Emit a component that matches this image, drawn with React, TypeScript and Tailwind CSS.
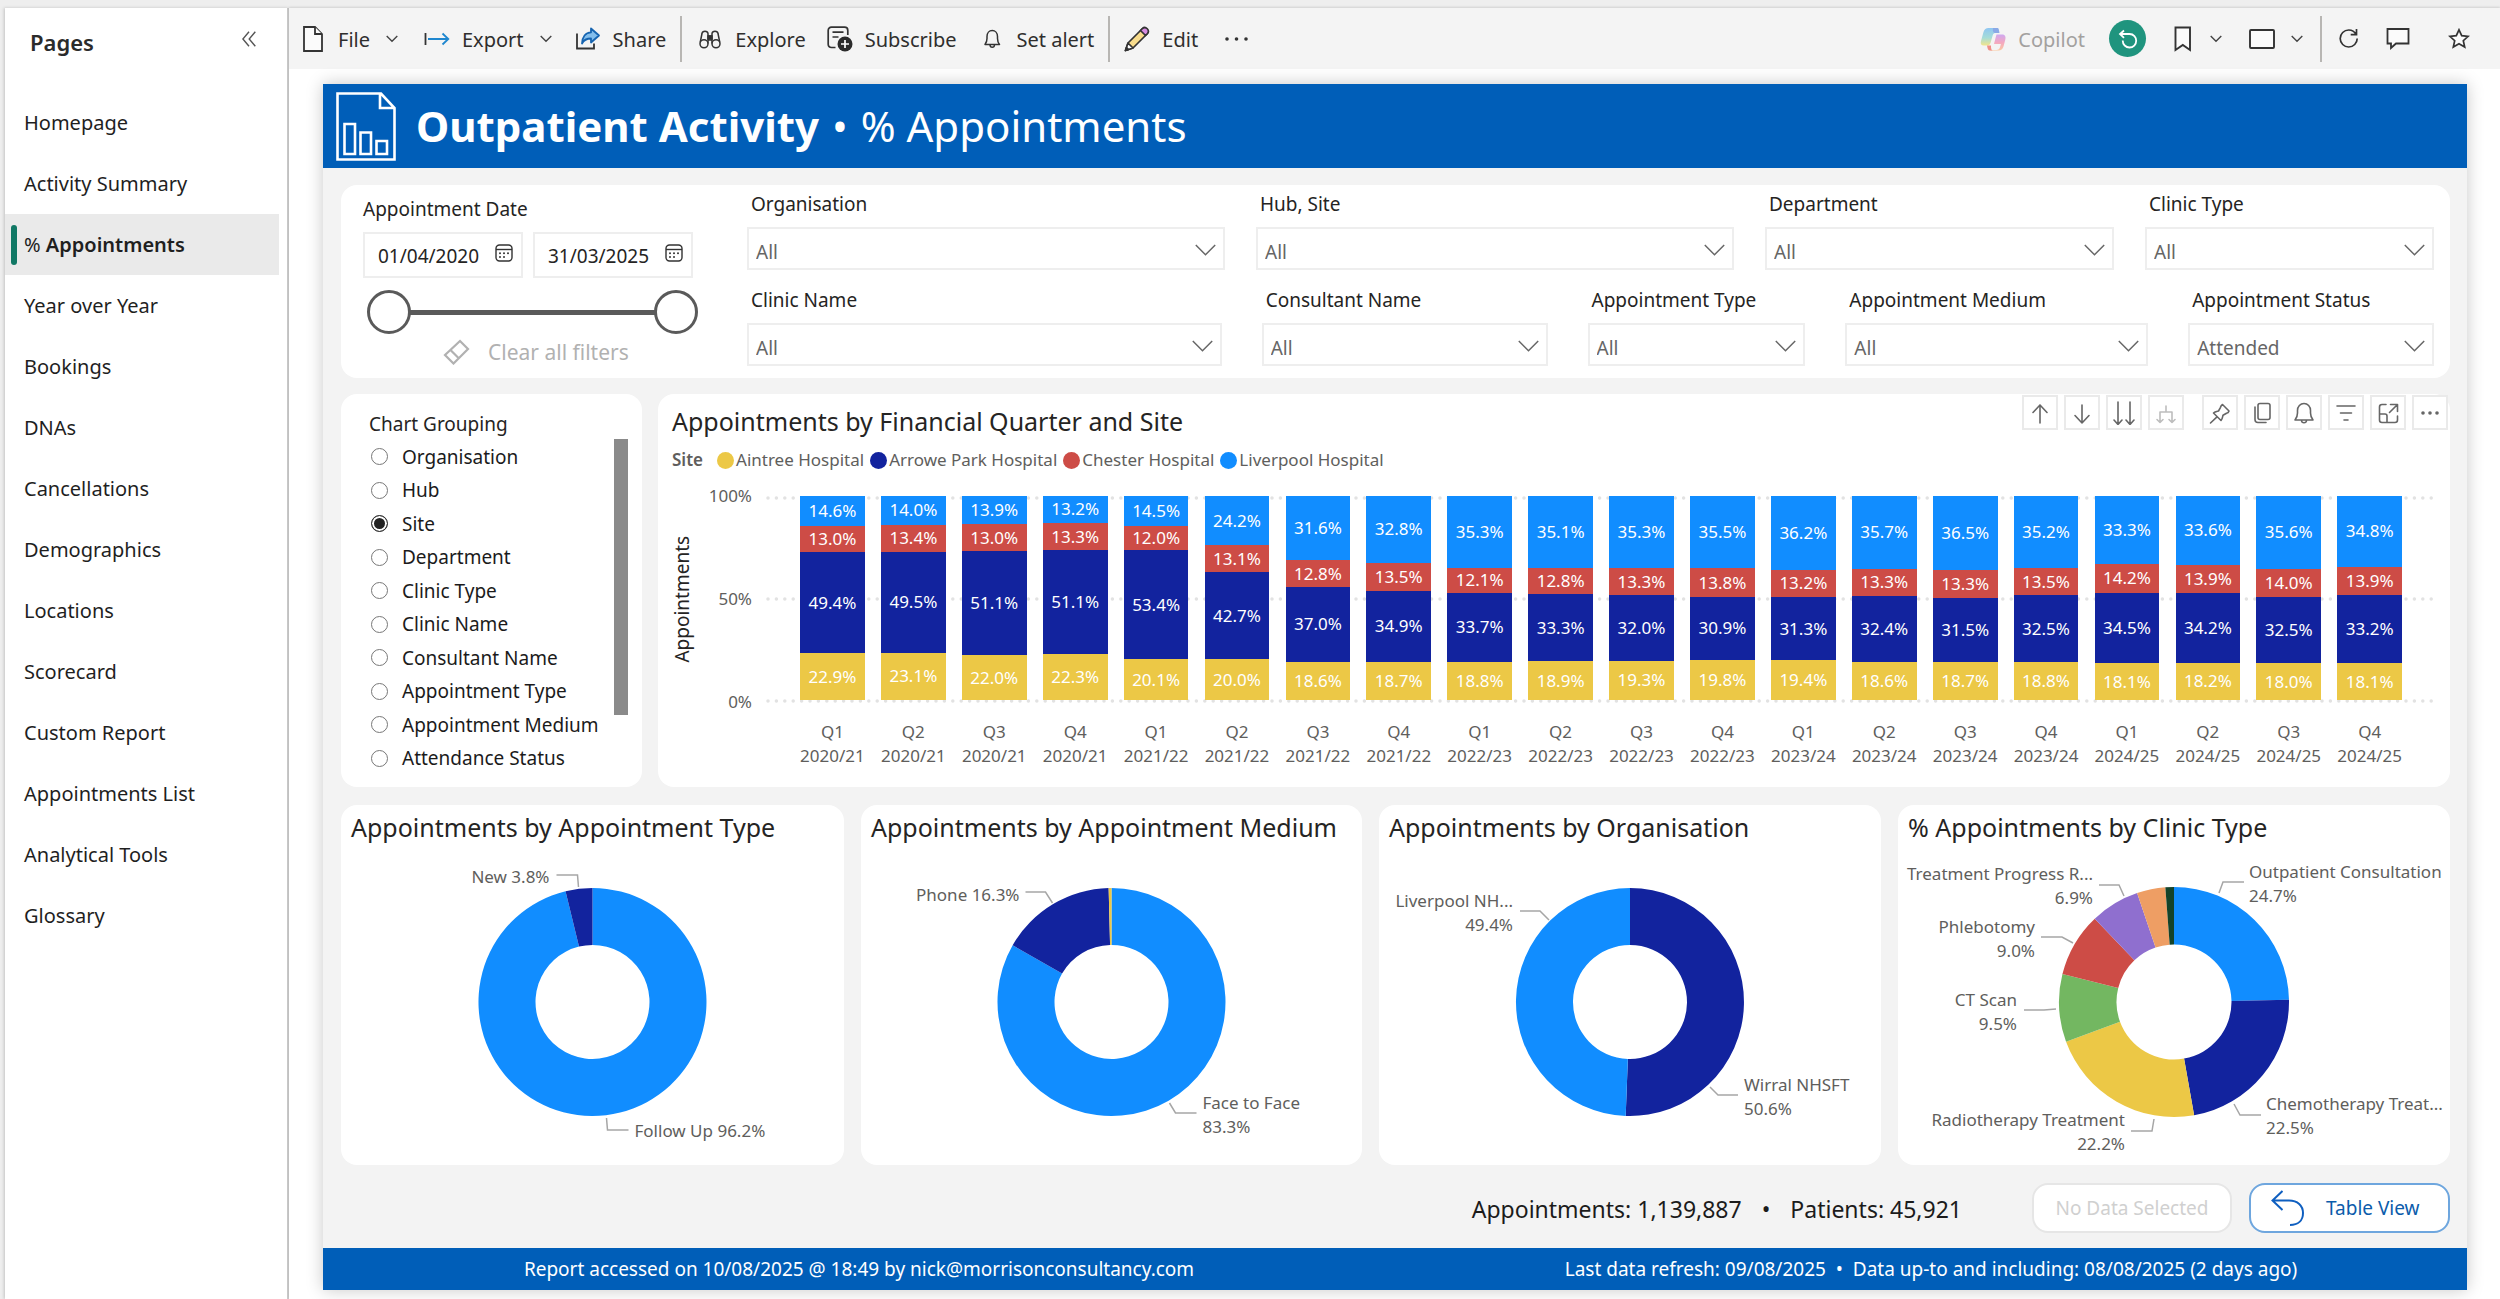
import type { ReactNode } from "react";

const NAV = [
  "Homepage", "Activity Summary", "% Appointments", "Year over Year", "Bookings", "DNAs",
  "Cancellations", "Demographics", "Locations", "Scorecard", "Custom Report",
  "Appointments List", "Analytical Tools", "Glossary",
];

const GROUPS = [
  "Organisation", "Hub", "Site", "Department", "Clinic Type", "Clinic Name",
  "Consultant Name", "Appointment Type", "Appointment Medium", "Attendance Status",
];

/* Share of appointments per quarter: Liverpool, Chester, Arrowe Park, Aintree */
const QUARTERS: [string, string, number, number, number, number][] = [
  ["Q1", "2020/21", 14.6, 13.0, 49.4, 22.9],
  ["Q2", "2020/21", 14.0, 13.4, 49.5, 23.1],
  ["Q3", "2020/21", 13.9, 13.0, 51.1, 22.0],
  ["Q4", "2020/21", 13.2, 13.3, 51.1, 22.3],
  ["Q1", "2021/22", 14.5, 12.0, 53.4, 20.1],
  ["Q2", "2021/22", 24.2, 13.1, 42.7, 20.0],
  ["Q3", "2021/22", 31.6, 12.8, 37.0, 18.6],
  ["Q4", "2021/22", 32.8, 13.5, 34.9, 18.7],
  ["Q1", "2022/23", 35.3, 12.1, 33.7, 18.8],
  ["Q2", "2022/23", 35.1, 12.8, 33.3, 18.9],
  ["Q3", "2022/23", 35.3, 13.3, 32.0, 19.3],
  ["Q4", "2022/23", 35.5, 13.8, 30.9, 19.8],
  ["Q1", "2023/24", 36.2, 13.2, 31.3, 19.4],
  ["Q2", "2023/24", 35.7, 13.3, 32.4, 18.6],
  ["Q3", "2023/24", 36.5, 13.3, 31.5, 18.7],
  ["Q4", "2023/24", 35.2, 13.5, 32.5, 18.8],
  ["Q1", "2024/25", 33.3, 14.2, 34.5, 18.1],
  ["Q2", "2024/25", 33.6, 13.9, 34.2, 18.2],
  ["Q3", "2024/25", 35.6, 14.0, 32.5, 18.0],
  ["Q4", "2024/25", 34.8, 13.9, 33.2, 18.1],
];

const BLUE = "#118dff";
const NAVY = "#12239e";
const YELLOW = "#ecc846";
const RED = "#cd4c46";

function ChevronDown({ className = "" }: { className?: string }) {
  return (
    <svg viewBox="0 0 12 8" width="12" height="8" fill="none" stroke="#444" strokeWidth="1.4" className={className} aria-hidden="true">
      <path d="M0.7 1 6 6.3 11.3 1" />
    </svg>
  );
}

function ToolButton({ icon, label, chevron, muted, className = "" }: { icon: ReactNode; label?: string; chevron?: boolean; muted?: boolean; className?: string }) {
  return (
    <button className={`flex shrink-0 items-center ${muted ? "text-[#a3a19f]" : "text-[#2f2e2d]"} ${className}`} aria-label={label ?? "Toolbar action"}>
      {icon}
      {label && <span className="pt-[2px]">{label}</span>}
      {chevron && <ChevronDown className="ml-4" />}
    </button>
  );
}

function Divider({ className = "" }: { className?: string }) {
  return <span className={`h-[46px] w-[2px] shrink-0 bg-[#b8b6b3] ${className}`} />;
}

const FileIcon = (
  <svg width="20" height="26" viewBox="0 0 20 26" fill="#fbfbfb" stroke="#333" strokeWidth="1.8" className="mr-[15px]">
    <path d="M1 1h11l7 7v17H1z" /><path d="M12 1v7h7" />
  </svg>
);
const ExportIcon = (
  <svg width="26" height="14" viewBox="0 0 26 14" fill="none" stroke="#1f87cf" strokeWidth="1.8" className="mr-3">
    <path d="M1.5 1v12" stroke="#333" /><path d="M4 7h20M18.5 1.5 24.3 7l-5.8 5.500" />
  </svg>
);
const ShareIcon = (
  <svg width="26" height="24" viewBox="0 0 26 24" fill="none" strokeWidth="1.8" className="mr-3">
    <path d="M2 6.500v15h17v-5" stroke="#333" />
    <path d="M16 1.500 24 8.500 16 15.500v-4c-4 0-7 1-9 5 .3-6.500 3.500-11 9-11.200z" fill="#83beec" stroke="#1664b0" strokeLinejoin="round" />
  </svg>
);
const ExploreIcon = (
  <svg width="22" height="20" viewBox="0 0 22 20" fill="none" stroke="#333" strokeWidth="1.500" className="mr-[14px]">
    <circle cx="5" cy="14.800" r="4" /><circle cx="17" cy="14.800" r="4" />
    <path d="M1.200 13.500 3 4.500C3.500 1.500 8.500 1.500 9 4.500v10M20.800 13.500 19 4.500c-.5-3-5.500-3-6 0v10M9 7h4M9 11h4" />
    <path d="M9 7h4v3H9z" fill="#333" />
  </svg>
);
const SubscribeIcon = (
  <svg width="26" height="26" viewBox="0 0 26 26" fill="none" stroke="#333" strokeWidth="1.700" className="mr-3">
    <path d="M8.500 21.500H4.500c-2 0-3.300-1.300-3.300-3.300V4.500c0-2 1.300-3.300 3.300-3.300h13c2 0 3.300 1.300 3.300 3.300V9" />
    <path d="M5.500 6.200h11M5.500 11h6" />
    <circle cx="18" cy="18" r="7.500" fill="#2b2b2b" stroke="none" />
    <path d="M18 14v8M14 18h8" stroke="#fff" />
  </svg>
);
const BellPath = "M2 15.500h14.500c-1.600-2-2-3.500-2-6v-2c0-3.500-2.300-6-5.300-6s-5.200 2.500-5.200 6v2c0 2.500-.5 4-2 6zM7 16c.2 3 4.300 3 4.500 0";
const BellIcon = (
  <svg width="19" height="20" viewBox="0 0 19 20" fill="none" stroke="#333" strokeWidth="1.500" strokeLinejoin="round" className="mr-[15px]">
    <path d={BellPath} />
  </svg>
);
const PencilIcon = (
  <svg width="26" height="26" viewBox="0 0 26 26" strokeWidth="1.700" stroke="#333" strokeLinejoin="round" className="mr-3">
    <path d="M1.500 24.500 4 17 18.500 2.500l5 5L9 22z" fill="#f8dc8c" />
    <path d="M18.500 2.500c3-3 8 2 5 5l-2 2-5-5z" fill="#d68be0" />
    <path d="M1.500 24.500 4 17l5 5z" fill="#fff" />
    <path d="m1.500 24.500 1-3 2 2z" fill="#333" />
  </svg>
);
const CopilotIcon = (
  <svg width="26" height="24" viewBox="0 0 26 24" className="mr-3">
    <defs>
      <linearGradient id="cpA" x1="0" y1="0" x2="0" y2="1"><stop offset="0" stopColor="#8fc6f2" /><stop offset=".55" stopColor="#a5dcd8" /><stop offset="1" stopColor="#f2e58c" /></linearGradient>
      <linearGradient id="cpB" x1="0" y1="0" x2="0" y2="1"><stop offset="0" stopColor="#cfa8f0" /><stop offset=".5" stopColor="#f4a8c0" /><stop offset="1" stopColor="#fbc9a0" /></linearGradient>
    </defs>
    <path d="M9 23h7.500c2 0 3-1 3.600-3l.8-3H14l1.500-6 1-3.500H22c3.500 0 4 2.500 3.200 5.500l-1.700 6.500C22.700 22 21 23.500 18.500 23.500h-7z" fill="url(#cpB)" />
    <path d="M17.500 1h-9C6 1 4.300 2.500 3.500 5L1 14c-.8 3 .2 4.500 3 4.500h3.500c2 0 2.700-1.500 3.300-3.500l2-7c.5-1.500 1.500-2 3-2H19c-.2-3-.5-5-1.500-5z" fill="url(#cpA)" />
    <path d="M13 1h4.500c1 0 1.500 2 2 5h-3.700c-2.300 0-3.300-1-2.800-5z" fill="#8aa9e6" />
    <path d="M7 18.500h4c-.2 3 .5 5 2 5h-3c-2 0-2.500-2-3-5z" fill="#f08f86" />
  </svg>
);

function Toolbar() {
  return (
    <header className="flex h-[61px] items-center justify-between bg-[#f4f4f4] pr-[30px] pl-[14px] text-[20px] leading-7">
      <div className="flex items-center">
        <ToolButton icon={FileIcon} label="File" chevron />
        <ToolButton icon={ExportIcon} label="Export" chevron className="ml-[26px]" />
        <ToolButton icon={ShareIcon} label="Share" className="ml-[23px]" />
        <Divider className="mr-[17px] ml-[14px]" />
        <ToolButton icon={ExploreIcon} label="Explore" />
        <ToolButton icon={SubscribeIcon} label="Subscribe" className="ml-[21px]" />
        <ToolButton icon={BellIcon} label="Set alert" className="ml-[26px]" />
        <Divider className="mr-[14px] ml-[14px]" />
        <ToolButton icon={PencilIcon} label="Edit" />
        <ToolButton
          className="ml-[26px]"
          icon={<svg width="25" height="4" viewBox="0 0 25 4" fill="#333"><circle cx="3" cy="2" r="1.800" /><circle cx="12.500" cy="2" r="1.800" /><circle cx="22" cy="2" r="1.800" /></svg>}
        />
      </div>
      <div className="flex items-center">
        <ToolButton icon={CopilotIcon} label="Copilot" muted />
        <button aria-label="Reset filters" className="ml-6 flex size-[37px] items-center justify-center rounded-full bg-[#1f947e]">
          <svg width="20" height="20" viewBox="0 0 20 20" fill="none" stroke="#fff" strokeWidth="1.800"><path d="M6 1.500 2 5l4 3.800M2 5h9.500c4.200 0 6.700 3.200 6.700 6.800 0 3.800-3 6.700-6.700 6.700s-6.800-3-6.800-7" /></svg>
        </button>
        <ToolButton chevron className="ml-7" icon={<svg width="18" height="26" viewBox="0 0 18 26" fill="#fbfbfb" stroke="#333" strokeWidth="1.900" className="mr-[2px]"><path d="M1.500 1.500h14.500v22.500l-7.200-5-7.300 5z" /></svg>} />
        <ToolButton chevron className="ml-[27px]" icon={<svg width="26" height="20" viewBox="0 0 26 20" fill="#fbfbfb" stroke="#333" strokeWidth="1.900"><rect x="1" y="1" width="24" height="18" rx="1" /></svg>} />
        <Divider className="mr-4 ml-[17px]" />
        <ToolButton icon={<svg width="21" height="21" viewBox="0 0 21 21" fill="none" stroke="#333" strokeWidth="1.700"><path d="M18.500 1v5.700h-5.800M18 6.500C16.500 3.500 14 2 10.700 2 6 2 2.200 5.800 2.200 10.500S6 19 10.700 19s8.500-3.800 8.500-8.500" /></svg>} />
        <ToolButton className="ml-[27px]" icon={<svg width="24" height="22" viewBox="0 0 24 22" fill="#fbfbfb" stroke="#333" strokeWidth="1.800"><path d="M1.500 1h21v14.500H10L5 20v-4.500H1.500z" /></svg>} />
        <ToolButton className="ml-[38px]" icon={<svg width="22" height="21" viewBox="0 0 22 21" fill="#fbfbfb" stroke="#333" strokeWidth="1.700"><path d="m11 1.800 2.700 5.900 6.400.7-4.800 4.300 1.400 6.300L11 15.800 5.300 19l1.400-6.300L1.900 8.400l6.400-.7z" /></svg>} />
      </div>
    </header>
  );
}

function Sidebar() {
  return (
    <aside className="flex w-[284px] shrink-0 flex-col border-r-2 border-[#c9c9c9] bg-white shadow-[-1px_0_3px_rgba(0,0,0,0.18)]">
      <div className="flex h-[84px] items-start justify-between pr-[31px] pl-[25px]">
        <h2 className="mt-[18px] text-[22px] leading-8 font-semibold text-[#2b2b2b]">Pages</h2>
        <button aria-label="Collapse pages" className="mt-[23px]">
          <svg width="14" height="16" viewBox="0 0 14 16" fill="none" stroke="#555" strokeWidth="1.400"><path d="M7 .8.900 8 7 15.200M13.300.8 7.200 8l6.100 7.200" /></svg>
        </button>
      </div>
      <nav className="flex flex-col pr-2">
        {NAV.map((n) => {
          const on = n === "% Appointments";
          return (
            <a key={n} href="#" className={`flex h-[61px] items-center text-[20px] text-[#1f1f1f] ${on ? "bg-[#eaeaea] font-semibold" : ""}`}>
              <span className={`ml-[6px] h-10 w-[6px] rounded-full ${on ? "bg-[#117865]" : ""}`} />
              <span className="ml-[7px]">{on ? <><span className="font-normal">%</span> Appointments</> : n}</span>
            </a>
          );
        })}
      </nav>
    </aside>
  );
}

function Filter({ label, grow, value = "All" }: { label: string; grow: string; value?: string }) {
  return (
    <label className={`flex min-w-0 flex-col ${grow}`}>
      <span className="h-8 pl-1 text-[19px] leading-6 whitespace-nowrap text-[#252423]">{label}</span>
      <span className="relative mt-[3px]">
        <select defaultValue={value} className="h-[43px] w-full appearance-none rounded-none border-2 border-[#eeeeee] bg-white pt-[7px] pl-[7px] text-[19px] text-[#666]">
          <option>{value}</option>
        </select>
        <svg width="21" height="12" viewBox="0 0 21 12" fill="none" stroke="#666" strokeWidth="1.500" className="pointer-events-none absolute top-[17px] right-[9px]"><path d="M.800 1 10.500 10.700 20.200 1" /></svg>
      </span>
    </label>
  );
}

function DateBox({ value, label }: { value: string; label: string }) {
  return (
    <span className="flex h-[46px] w-[160px] items-center border-2 border-[#eeeeee] pr-2 pl-[13px]">
      <input aria-label={label} defaultValue={value} className="w-full min-w-0 bg-transparent pt-[3px] text-[19px] text-[#252423] outline-none" />
      <svg width="18" height="18" viewBox="0 0 18 18" fill="none" stroke="#333" strokeWidth="1.400" className="mb-1 shrink-0">
        <rect x="1" y="1" width="16" height="16" rx="3.500" /><path d="M1 5.500h16" />
        <g fill="#333" stroke="none"><circle cx="5" cy="9.300" r="1" /><circle cx="9" cy="9.300" r="1" /><circle cx="13" cy="9.300" r="1" /><circle cx="5" cy="13" r="1" /><circle cx="9" cy="13" r="1" /></g>
      </svg>
    </span>
  );
}

function RangeHandle({ label, value }: { label: string; value: number }) {
  return (
    <input
      type="range" aria-label={label} min={0} max={100} defaultValue={value}
      className="pointer-events-none absolute inset-0 w-full appearance-none bg-transparent [&::-webkit-slider-thumb]:pointer-events-auto [&::-webkit-slider-thumb]:size-11 [&::-webkit-slider-thumb]:appearance-none [&::-webkit-slider-thumb]:rounded-full [&::-webkit-slider-thumb]:border-[3px] [&::-webkit-slider-thumb]:border-[#5a5a5a] [&::-webkit-slider-thumb]:bg-white"
    />
  );
}

function Filters() {
  return (
    <section className="flex h-[193px] rounded-2xl bg-white pr-4 pl-[22px]">
      <div className="w-[384px] shrink-0">
        <h3 className="mt-3 text-[19px] leading-6 text-[#252423]">Appointment Date</h3>
        <div className="mt-[11px] flex gap-[10px]">
          <DateBox value="01/04/2020" label="Start date" />
          <DateBox value="31/03/2025" label="End date" />
        </div>
        <div className="relative mt-3 ml-1 flex h-11 w-[331px] items-center">
          <span className="mx-5 h-[5px] grow bg-[#5a5a5a]" />
          <RangeHandle label="From" value={0} />
          <RangeHandle label="To" value={100} />
        </div>
        <button className="mt-1 ml-[80px] flex items-center gap-[18px] text-[21px] leading-7 text-[#b1b1b1]">
          <svg width="27" height="26" viewBox="0 0 27 26" fill="none" stroke="#b1b1b1" strokeWidth="2.200"><path d="M17 2 25 10 10.500 24.500 2 16zM7.500 11l8.500 8.500M2 16" /></svg>
          Clear all filters
        </button>
      </div>
      <div className="flex grow flex-col pt-[7px]">
        <div className="flex gap-[31px]">
          <Filter label="Organisation" grow="flex-[478]" />
          <Filter label="Hub, Site" grow="flex-[478]" />
          <Filter label="Department" grow="flex-[349]" />
          <Filter label="Clinic Type" grow="flex-[289]" />
        </div>
        <div className="mt-[18px] flex gap-10">
          <Filter label="Clinic Name" grow="flex-[475]" />
          <Filter label="Consultant Name" grow="flex-[286]" />
          <Filter label="Appointment Type" grow="flex-[218]" />
          <Filter label="Appointment Medium" grow="flex-[303]" />
          <Filter label="Appointment Status" grow="flex-[246]" value="Attended" />
        </div>
      </div>
    </section>
  );
}

function Grouping() {
  return (
    <section className="flex w-[301px] shrink-0 rounded-2xl bg-white pt-4 pr-[14px] pl-7">
      <fieldset className="grow">
        <legend className="float-left w-full text-[19px] leading-7 text-[#252423]">Chart Grouping</legend>
        <div className="clear-both flex h-[337px] flex-col pt-[2px]">
          {GROUPS.map((g) => (
            <label key={g} className="flex flex-1 items-center gap-[14px] text-[19px] leading-6 whitespace-nowrap text-[#1b1b1b]">
              <input
                type="radio" name="grouping" defaultChecked={g === "Site"}
                className="ml-[2px] size-[17px] shrink-0 appearance-none rounded-full border border-[#777] bg-white checked:border-[#333] checked:bg-[#222] checked:shadow-[inset_0_0_0_2px_#fff]"
              />
              {g}
            </label>
          ))}
        </div>
      </fieldset>
      <div className="mt-[29px] h-[276px] w-[14px] shrink-0 bg-[#8a8a8a]" />
    </section>
  );
}

function IconBox({ children, label, className = "" }: { children: ReactNode; label: string; className?: string }) {
  return (
    <button aria-label={label} className={`flex h-[35px] w-9 items-center justify-center border-2 border-[#eaeaea] bg-white ${className}`}>
      <svg width="22" height="24" viewBox="0 0 22 24" fill="none" stroke="#666" strokeWidth="1.600" strokeLinecap="round" strokeLinejoin="round">{children}</svg>
    </button>
  );
}

function ChartActions() {
  return (
    <div className="flex gap-[6px]">
      <IconBox label="Drill up"><path d="M11 22V4M4 11.500 11 4l7 7.500" /></IconBox>
      <IconBox label="Drill down"><path d="M11 4v18M4 14.500 11 22l7-7.500" /></IconBox>
      <IconBox label="Next level"><path d="M5 1v22M1 19l4 4.500L9 19M17 1v22M13 19l4 4.500 4-4.500" /></IconBox>
      <IconBox label="Expand all"><g stroke="#bdbdbd"><path d="M11 5v6M5 21.500V11h12v10.500M2 18.500l3 3 3-3M14 18.500l3 3 3-3" /></g></IconBox>
      <IconBox label="Pin" className="ml-3"><path d="M13.500 3.500 20 10c-.5 1.500-1 2-2.500 2.300l-3.500 2c-.5 1.700-.5 3.500-2 5.200L4.500 12c1.500-1.500 3.500-1.600 5-2l2-3.700c.3-1.300.8-2 2-2.800zM8 15.800 1.500 22" /></IconBox>
      <IconBox label="Copy"><rect x="7" y="2.500" width="12" height="16" rx="2" /><path d="M4 6v12.500c0 2 1.200 3 3 3h8" /></IconBox>
      <IconBox label="Alert"><path d="M2 19h18c-2-2.500-2.500-4-2.500-7v-2.500c0-4-2.800-7-6.500-7s-6.500 3-6.500 7V12c0 3-.5 4.500-2.500 7zM8.500 19.500c.2 3 4.800 3 5 0" /></IconBox>
      <IconBox label="Filters"><path d="M2 5h18M5.500 12h11M9 19h4" /></IconBox>
      <IconBox label="Focus mode"><path d="M9 3.500H5c-1.500 0-2.500 1-2.500 2.500v13c0 1.500 1 2.500 2.500 2.500h13c1.500 0 2.500-1 2.500-2.500v-4M2.500 13H8c1.200 0 2 .8 2 2v6.500M13.500 3.500h7v7M20 4l-7.500 7.500" /></IconBox>
      <IconBox label="More options"><g fill="#666" stroke="none"><circle cx="4" cy="12" r="1.800" /><circle cx="11" cy="12" r="1.800" /><circle cx="18" cy="12" r="1.800" /></g></IconBox>
    </div>
  );
}

const LEGEND = [
  ["Aintree Hospital", "bg-[#ecc846]"],
  ["Arrowe Park Hospital", "bg-[#12239e]"],
  ["Chester Hospital", "bg-[#cd4c46]"],
  ["Liverpool Hospital", "bg-[#118dff]"],
];
const SERIES = ["bg-[#118dff]", "bg-[#cd4c46]", "bg-[#12239e]", "bg-[#ecc846]"];

function BarChart() {
  return (
    <section className="min-w-0 grow rounded-2xl bg-white pt-px pr-[2px] pl-[14px]">
      <div className="flex items-start justify-between">
        <h3 className="mt-2 text-[25px] leading-9 text-[#252423]">Appointments by Financial Quarter and Site</h3>
        <ChartActions />
      </div>
      <div className="mt-[9px] flex h-6 items-center text-[17px] text-[#605e5c]">
        <span className="mr-[14px] font-semibold">Site</span>
        {LEGEND.map(([name, color]) => (
          <span key={name} className="mr-[6px] flex items-center gap-[2px]"><i className={`size-[17px] rounded-full ${color}`} />{name}</span>
        ))}
      </div>
      <div className="mt-6 flex pr-3">
        <div className="flex h-[206px] w-5 items-center justify-center">
          <span className="-rotate-90 text-[19px] whitespace-nowrap text-[#252423]">Appointments</span>
        </div>
        <div className="mr-[14px] flex h-[206px] w-[60px] flex-col justify-between text-right text-[17px] text-[#605e5c]">
          {["100%", "50%", "0%"].map((t) => <span key={t} className="flex h-0 items-center justify-end">{t}</span>)}
        </div>
        <div className="relative min-w-0 grow px-[26px]">
          <svg className="absolute inset-x-0 top-0 h-[208px] w-full" stroke="#e2e2e2" strokeWidth="3.500" strokeLinecap="round" strokeDasharray="0 8.400">
            <line x1="2" x2="100%" y1="2" y2="2" /><line x1="2" x2="100%" y1="103" y2="103" /><line x1="2" x2="100%" y1="205" y2="205" />
          </svg>
          <div className="relative flex h-[204px]">
            {QUARTERS.map(([q, y, ...parts]) => (
              <div key={q + y} className="flex flex-1 flex-col items-center">
                {parts.map((p, i) => (
                  <div key={i} className={`flex w-4/5 items-center justify-center text-[17px] leading-5 text-white ${SERIES[i]}`} style={{ flexGrow: p, flexBasis: 0 }}>
                    {p.toFixed(1)}%
                  </div>
                ))}
              </div>
            ))}
          </div>
          <div className="mt-5 flex text-center text-[17px] leading-6 text-[#605e5c]">
            {QUARTERS.map(([q, y]) => <div key={q + y} className="flex-1">{q}<br />{y}</div>)}
          </div>
        </div>
      </div>
    </section>
  );
}

type Label = { lines: string[]; x: number; y: number; end?: boolean; path: string };

function slicePath(from: number, to: number, r: number, r0: number) {
  const pt = (f: number, rad: number) => {
    const a = f * 2 * Math.PI;
    return `${(Math.sin(a) * rad).toFixed(2)} ${(-Math.cos(a) * rad).toFixed(2)}`;
  };
  const big = to - from > 0.5 ? 1 : 0;
  return `M${pt(from, r)}A${r} ${r} 0 ${big} 1 ${pt(to, r)}L${pt(to, r0)}A${r0} ${r0} 0 ${big} 0 ${pt(from, r0)}Z`;
}

function Donut({ title, slices, labels, r = 114, grow }: { title: string; slices: [number, string][]; labels: Label[]; r?: number; grow: string }) {
  const total = slices.reduce((s, [v]) => s + v, 0);
  let acc = 0;
  return (
    <section className={`min-w-0 rounded-2xl bg-white ${grow}`}>
      <h3 className="h-11 pl-[10px] text-[25px] leading-[44px] whitespace-nowrap text-[#252423]">{title}</h3>
      <svg className="h-[316px] w-full overflow-visible" viewBox="-250 -153 500 316" role="img" aria-label={title}>
        {slices.map(([v, c], i) => {
          const from = acc / total;
          acc += v;
          return <path key={i} d={slicePath(from, acc / total, r, r / 2)} fill={c} />;
        })}
        {labels.map((l) => (
          <g key={l.lines[0]}>
            <path d={l.path} fill="none" stroke="#a6a6a6" strokeWidth="1.500" />
            {l.lines.map((t, i) => (
              <text key={t} x={l.x} y={l.y + 6 + i * 24} textAnchor={l.end ? "end" : "start"} className="fill-[#605e5c] text-[17px]">{t}</text>
            ))}
          </g>
        ))}
      </svg>
    </section>
  );
}

function Donuts() {
  return (
    <div className="mt-[18px] flex gap-[17px]">
      <Donut
        grow="flex-[503]" title="Appointments by Appointment Type"
        slices={[[96.2, BLUE], [3.8, NAVY]]}
        labels={[
          { lines: ["New 3.8%"], x: -43, y: -125, end: true, path: "M-36 -127H-15L-14 -115" },
          { lines: ["Follow Up 96.2%"], x: 42, y: 129, path: "M14 116 15 128H36" },
        ]}
      />
      <Donut
        grow="flex-[501]" title="Appointments by Appointment Medium"
        slices={[[83.3, BLUE], [16.3, NAVY], [0.4, YELLOW]]}
        labels={[
          { lines: ["Phone 16.3%"], x: -92, y: -107, end: true, path: "M-86 -110H-66L-59 -99" },
          { lines: ["Face to Face", "83.3%"], x: 91, y: 101, path: "M58 101 64 111H85" },
        ]}
      />
      <Donut
        grow="flex-[502]" title="Appointments by Organisation"
        slices={[[50.6, NAVY], [49.4, BLUE]]}
        labels={[
          { lines: ["Liverpool NH...", "49.4%"], x: -117, y: -101, end: true, path: "M-110 -91H-90L-81 -82" },
          { lines: ["Wirral NHSFT", "50.6%"], x: 114, y: 83, path: "M80 85 88 93H108" },
        ]}
      />
      <Donut
        grow="flex-[552]" title="% Appointments by Clinic Type" r={115}
        slices={[[24.7, BLUE], [22.5, NAVY], [22.2, YELLOW], [9.5, "#73b761"], [9, RED], [6.9, "#8f6fcf"], [4, "#ee9e64"], [1.2, "#14432a"]]}
        labels={[
          { lines: ["Outpatient Consultation", "24.7%"], x: 75, y: -130, path: "M45 -109 49 -120H70" },
          { lines: ["Chemotherapy Treat...", "22.5%"], x: 92, y: 102, path: "M60 102 66 113H87" },
          { lines: ["Radiotherapy Treatment", "22.2%"], x: -49, y: 118, end: true, path: "M-20 117 -22 129H-43" },
          { lines: ["CT Scan", "9.5%"], x: -157, y: -2, end: true, path: "M-150 8H-130L-118 7" },
          { lines: ["Phlebotomy", "9.0%"], x: -139, y: -75, end: true, path: "M-133 -65H-112L-101 -59" },
          { lines: ["Treatment Progress R...", "6.9%"], x: -81, y: -128, end: true, path: "M-75 -117H-55L-50 -106" },
        ]}
      />
    </div>
  );
}

export default function App() {
  return (
    <div className="flex min-h-screen bg-[#eeeeee] pt-2 pl-[5px] font-['Noto_Sans','Open_Sans',sans-serif]">
      <Sidebar />
      <div className="min-w-0 grow bg-white shadow-[0_-1px_2px_rgba(0,0,0,0.12)]">
        <Toolbar />
        <main className="mt-[15px] mr-[33px] mb-[9px] ml-[34px] bg-[#f3f3f3] shadow-[0_0_16px_rgba(0,0,0,0.22)]">
          <div className="flex h-[84px] items-center bg-[#005eb8] pl-[13px] text-[42px] text-white">
            <svg width="60" height="69" viewBox="0 0 60 69" fill="none" stroke="#fff" strokeWidth="2.600" aria-hidden="true">
              <path d="M1.500 1.500h43.500L58.500 16v51.500h-57zM44 1.500V16h14.500" />
              <path d="M8.500 32h10.500v30H8.500zM24.500 40.500H35V62H24.500zM40.500 49H51v13H40.500z" />
            </svg>
            <h1 className="ml-5 pb-[2px] whitespace-nowrap"><b>Outpatient Activity</b><span className="mx-[2px]"> • </span>% Appointments</h1>
          </div>
          <div className="pt-[17px] pr-[17px] pl-[18px]">
            <Filters />
            <div className="mt-4 flex h-[393px] gap-4">
              <Grouping />
              <BarChart />
            </div>
            <Donuts />
            <div className="flex h-[83px] items-center justify-end pt-[3px]">
              <p className="mr-[70px] flex gap-5 pt-[2px] text-[23px] text-[#1b1b1b]"><span>Appointments: 1,139,887</span><span>•</span><span>Patients: 45,921</span></p>
              <button disabled className="h-[50px] w-[200px] rounded-2xl border-2 border-[#e6e6e6] bg-white text-[19px] text-[#d0d0d0]">No Data Selected</button>
              <button className="ml-[17px] flex h-[50px] w-[201px] items-center rounded-2xl border-2 border-[#6ea6de] bg-white pl-5 text-[19px] text-[#0b5cab]">
                <svg width="34" height="36" viewBox="0 0 34 36" fill="none" stroke="#0f5fc0" strokeWidth="2"><path d="M11.500 1 1.500 10.500l10 9.500M1.500 10.500H18c8.500 0 14 5 14 12.500S27 35 19 35" /></svg>
                <span className="ml-[21px]">Table View</span>
              </button>
            </div>
          </div>
          <footer className="grid h-[42px] grid-cols-2 items-center bg-[#005eb8] text-center text-[19px] text-white">
            <span>Report accessed on 10/08/2025 @ 18:49 by nick@morrisonconsultancy.com</span>
            <span>Last data refresh: 09/08/2025 &nbsp;•&nbsp; Data up-to and including: 08/08/2025 (2 days ago)</span>
          </footer>
        </main>
      </div>
    </div>
  );
}
